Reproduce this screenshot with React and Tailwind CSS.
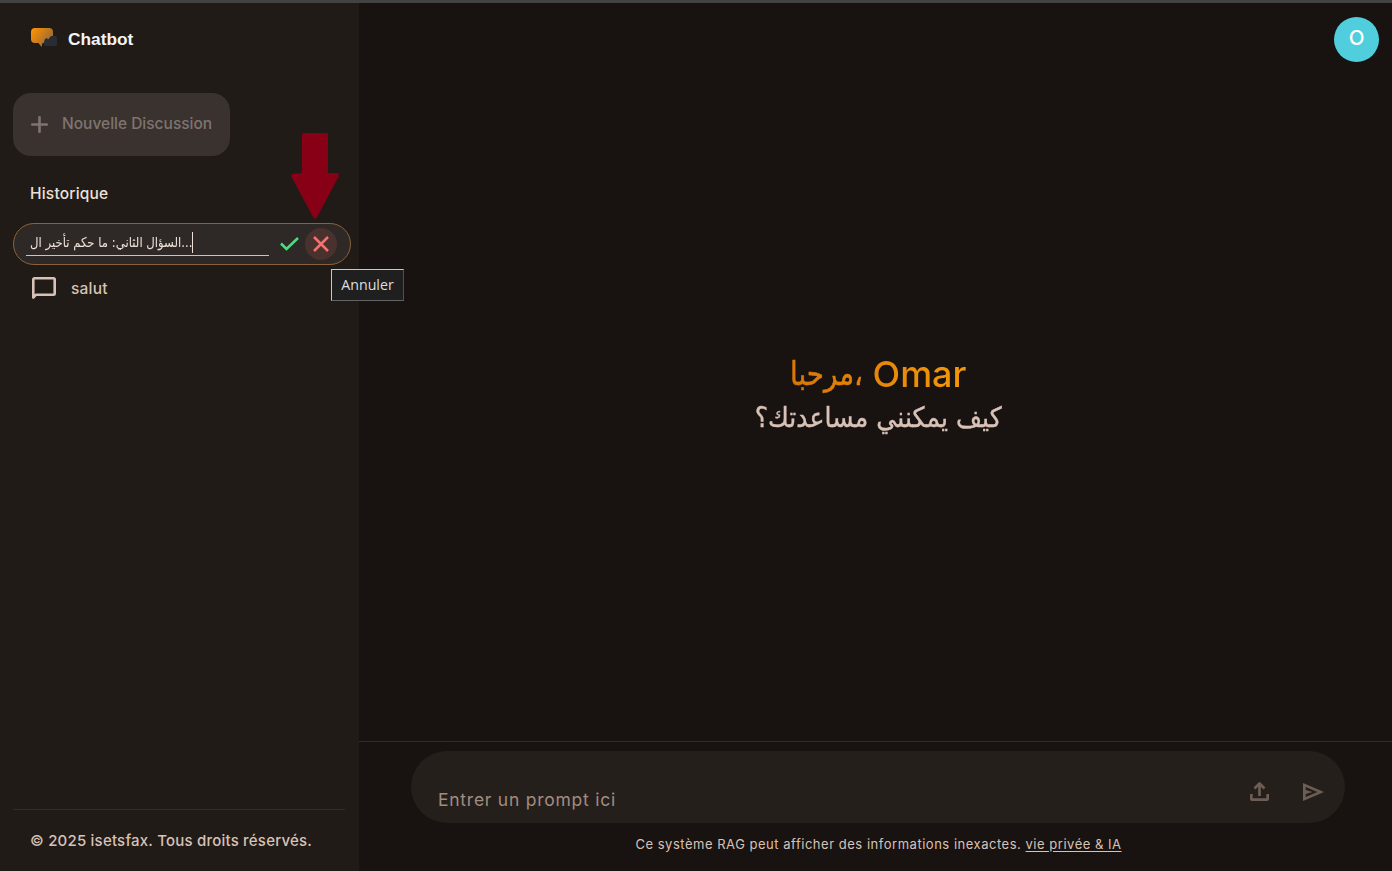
import React from "react";

function Logo() {
  return (
    <svg className="h-[20px] w-[27px]" viewBox="0 0 27 20" fill="none">
      <defs>
        <linearGradient id="bubble" x1="1" y1="1" x2="22" y2="16" gradientUnits="userSpaceOnUse">
          <stop stopColor="#ff9100" />
          <stop offset="1" stopColor="#8a6440" />
        </linearGradient>
      </defs>
      <path d="M4 0H18Q22 0 22 4V11Q22 15 18 15H11.5L10.5 19L7.5 15H4Q0 15 0 11V4Q0 0 4 0Z" fill="url(#bubble)" />
      <path d="M14 11L16 10L17 11.5L20 8H24.5Q26 8 26 9.500V16.500Q26 18 24.500 18H14.500Q13 18 13 16.500V14Z" fill="#292b35" />
    </svg>
  );
}

function Sidebar() {
  return (
    <aside className="flex w-[359px] shrink-0 flex-col bg-[#201b17] px-[13px]">
      <div className="flex h-[70px] items-center gap-[10px] pl-[18px]">
        <Logo />
        <span className="pt-px font-['Liberation_Sans',sans-serif] text-[17.300px] leading-[20px] font-bold text-[#f1f5f9]">Chatbot</span>
      </div>
      <button className="mt-[20px] flex h-[63px] w-[217px] items-center gap-[14px] rounded-[18px] bg-[#3a322f] pl-[18px] text-[#7f746f]">
        <svg className="size-[17px]" viewBox="0 0 17 17" stroke="currentColor" strokeWidth="2.600" strokeLinecap="round">
          <path d="M8.500 1.200V15.800M1.200 8.500H15.800" />
        </svg>
        <span className="pb-px text-[15.500px] font-medium whitespace-nowrap">Nouvelle Discussion</span>
      </button>
      <h2 className="mt-[26px] pl-[17px] text-[15.500px] leading-[24px] font-medium tracking-[0.200px] text-[#eee0d9]">Historique</h2>
      <div className="mt-[17px] flex h-[42px] w-[338px] items-center rounded-full border border-[#8a6239] bg-[#2e2926] pl-[12px]">
        <div className="flex h-[32px] w-[243px] items-center self-start border-b border-[#ffb871] pt-[6px] pl-[4px]">
          <span className="w-[162px] shrink-0 pb-[3px]">
            <span className="inline-block origin-left scale-x-[0.865] font-['DejaVu_Sans',sans-serif] text-[13.500px] leading-[20px] whitespace-nowrap text-[#eee0d9]">السؤال الثاني: ما حكم تأخير ال...</span>
          </span>
          <span className="h-[21px] w-px bg-[#eee0d9]" />
        </div>
        <svg className="ml-[11px] h-[14px] w-[19px]" viewBox="0 0 19 14" fill="none" stroke="#4ade80" strokeWidth="2.500">
          <path d="M1 6.500L6.500 12L18 1" />
        </svg>
        <span className="ml-[6px] flex size-[32px] items-center justify-center rounded-full bg-[#49322d]">
          <svg className="size-[16px]" viewBox="0 0 16 16" stroke="#f87171" strokeWidth="2.500">
            <path d="M1 1L15 15M15 1L1 15" />
          </svg>
        </span>
      </div>
      <div className="flex h-[46px] items-center gap-[15px] pl-[19px] text-[#d8c2b7]">
        <svg className="h-[22px] w-[24px]" viewBox="0 0 24 22" fill="none" stroke="currentColor" strokeWidth="2.600" strokeLinejoin="round">
          <path d="M1.300 20.500V2.500Q1.300 1.300 2.500 1.300H21.500Q22.700 1.300 22.700 2.500V16.500Q22.700 17.700 21.500 17.700H4Z" />
        </svg>
        <span className="pt-[2px] text-[15.500px] font-medium tracking-[0.200px]">salut</span>
      </div>
      <div className="mt-auto h-[62px] w-[332px] border-t border-[#332d29] pt-[19px] pl-[17px]">
        <p className="text-[15px] leading-[24px] font-medium tracking-[0.210px] whitespace-nowrap text-[#d8c2b7]">© 2025 isetsfax. Tous droits réservés.</p>
      </div>
    </aside>
  );
}

function Composer() {
  return (
    <footer className="flex h-[130px] flex-col border-t border-[#332d29] pt-[9px]">
      <div className="mr-[47px] ml-[52px] flex h-[72px] items-center rounded-full bg-[#251f1b] pl-[27px] text-[#6c5e55]">
        <span className="mt-[26px] text-[17.500px] leading-[24px] tracking-[0.750px] text-[#a08d82]">Entrer un prompt ici</span>
        <svg className="mt-[9px] ml-auto h-[19px] w-[19px]" viewBox="0 0 19 19" fill="none" stroke="currentColor" strokeWidth="2.700" strokeLinejoin="round">
          <path d="M9.500 14V2M4.500 6.500L9.500 1.500L14.500 6.500M1.300 12V16.500Q1.300 17.700 2.500 17.700H16.500Q17.700 17.700 17.700 16.500V12" />
        </svg>
        <svg className="mt-[9px] mr-[21px] ml-[34px] h-[18px] w-[21px]" viewBox="0 0 21 18" fill="currentColor" fillRule="evenodd">
          <path d="M0 0L21 9L0 18ZM2.700 4V7L9.500 9L2.700 11V14L14.500 9Z" />
        </svg>
      </div>
      <p className="mt-[11px] pl-[6px] text-center text-[13px] leading-[20px] tracking-[0.520px] text-[#d8c2b7]">
        Ce système RAG peut afficher des informations inexactes. <a className="underline underline-offset-2">vie privée &amp; IA</a>
      </p>
    </footer>
  );
}

export default function App() {
  return (
    <div className="relative flex h-[871px] w-[1392px] overflow-hidden border-t-[3px] border-[#424242] bg-[#181210] font-['Inter',sans-serif]">
      <Sidebar />
      <main className="flex flex-1 flex-col">
        <header className="flex h-[72px] items-center justify-end pr-[13px]">
          <span className="flex size-[45px] items-center justify-center rounded-full bg-[#50cedd] pb-px text-[20.500px] font-medium text-white">O</span>
        </header>
        <section className="flex flex-1 flex-col items-center pt-[277px] pl-[5px]">
          <h1 className="flex gap-[10px] text-[36px] leading-[44px] font-medium text-transparent">
            <span className="flex w-[73px] shrink-0">
              <span className="shrink-0 origin-left scale-x-[0.840] bg-linear-to-r from-[#d97706] to-[#e3830a] bg-clip-text font-['DejaVu_Sans',sans-serif] text-[33px] whitespace-nowrap [-webkit-text-stroke:0.6px_transparent]">مرحبا،</span>
            </span>
            <span className="bg-linear-to-r from-[#e5860a] to-[#f3990b] bg-clip-text">Omar</span>
          </h1>
          <p className="scale-x-[0.900] font-['DejaVu_Sans',sans-serif] text-[28px] leading-[44px] text-[#d8c2b7] [-webkit-text-stroke:0.4px_#d8c2b7]" dir="rtl">كيف يمكنني مساعدتك؟</p>
        </section>
        <Composer />
      </main>
      <svg className="absolute top-[130px] left-[291px] h-[86px] w-[48px]" viewBox="0 0 48 86" fill="#880015">
        <path d="M12 0H36L37 1V40H47L48 43L26 84L24 86L22 84L0 43L1 41L11 40V1Z" />
      </svg>
      <div className="absolute top-[266px] left-[331px] flex h-[32px] w-[73px] items-center justify-center border border-t-[#c8c8c8] border-r-[#505050] border-b-[#646464] border-l-[#c8c8c8] bg-[#1f1f1f] font-['Open_Sans',sans-serif] text-[14.200px] text-[#dedede]">Annuler</div>
    </div>
  );
}
